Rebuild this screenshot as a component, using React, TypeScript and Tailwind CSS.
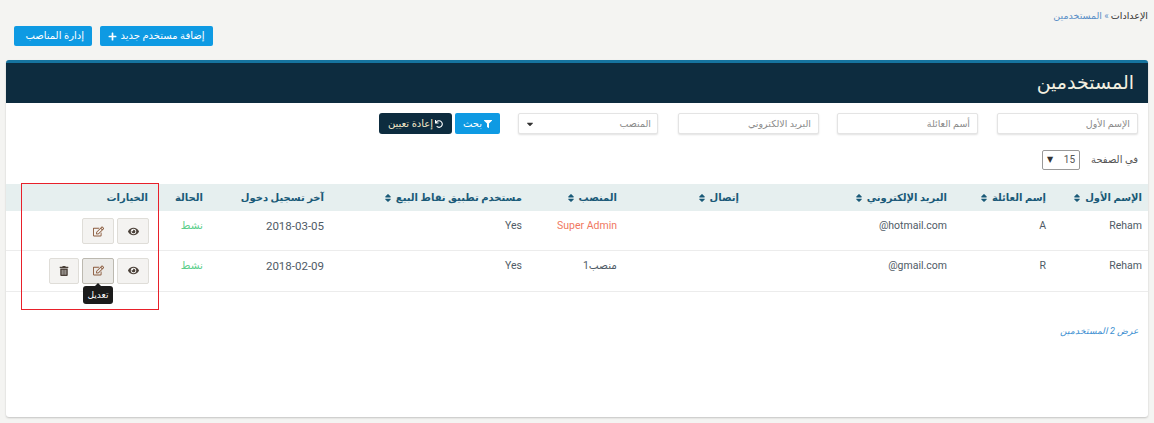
import { FaEye, FaRegEdit, FaTrashAlt, FaFilter, FaUndo, FaPlus, FaSort, FaCaretDown } from "react-icons/fa";

const cols = [
  { t: "الإسم الأول", w: "w-[96px]", s: true },
  { t: "إسم العائلة", w: "w-[99px]", s: true },
  { t: "البريد الإلكتروني", w: "w-[208px]", s: true },
  { t: "إتصال", w: "w-[122px]", s: true },
  { t: "المنصب", w: "w-[95px]", s: true },
  { t: "مستخدم تطبيق نقاط البيع", w: "w-[198px]", s: true },
  { t: "آخر تسجيل دخول", w: "w-[121px]", s: false },
  { t: "الحالة", w: "w-[55px]", s: false },
  { t: "الخيارات", w: "w-[148px]", s: false },
];

function Input({ p, w }: { p: string; w: string }) {
  return (
    <div className={`${w} h-[21px] bg-white border border-[#e4e4e4] rounded-[2px] shadow-[0_1px_2px_rgba(0,0,0,0.12)] pr-[7px] flex items-center text-[9.5px] text-[#8a8a8a] shrink-0`}>
      {p}
    </div>
  );
}

function Act({ children, active, w = "w-[32px]" }: { children: React.ReactNode; active?: boolean; w?: string }) {
  return (
    <button className={`${w} h-[26px] rounded-[2px] border flex items-center justify-center text-[11px] ${active ? "bg-[#ebeae7] border-[#bcb9b0]" : "bg-[#f4f3f1] border-[#dfddd8]"} text-[#4a4038]`}>
      {children}
    </button>
  );
}

function Row({ email, last, pos, posCls, date, trash, h }: { email: string; last: string; pos: string; posCls: string; date: string; trash?: boolean; h: string }) {
  const td = "px-[6px] pt-[8px] align-top text-[#4f5b66]";
  return (
    <tr className={`${h} border-b border-[#ececec]`}>
      <td className={td}>Reham</td>
      <td className={td}>{last}</td>
      <td className={td}><span dir="ltr">{email}</span></td>
      <td className={td}></td>
      <td className={`${td} ${posCls}`}>{pos}</td>
      <td className={td}>Yes</td>
      <td className={`${td} text-[11.5px]`}>{date}</td>
      <td className={`${td} !text-[#5ccf8c]`}>نشط</td>
      <td className="px-[5px] pt-[7px] align-top">
        <div className="flex gap-[3px]">
          <Act><FaEye /></Act>
          <Act active={trash}><FaRegEdit className="text-[#8a5a3c]" /></Act>
          {trash && <Act w="w-[30px]"><FaTrashAlt className="text-[10px]" /></Act>}
        </div>
      </td>
    </tr>
  );
}

export default function App() {
  return (
    <div dir="rtl" className="relative w-[1154px] h-[423px] overflow-hidden bg-[#f4f4f2] font-['Roboto','DejaVu_Sans',sans-serif] text-[10.5px] leading-[14px]">
      <div className="h-[26px] pt-[9px] pr-[6px] flex gap-[2px] text-[9.5px]">
        <span className="text-[#333]">الإعدادات</span>
        <span className="text-[#5b8fc7]">» المستخدمين</span>
      </div>
      <div className="flex gap-[8px] pr-[941px] h-[34px]">
        <button className="w-[113px] h-[20px] bg-[#0e9ae3] rounded-[2px] text-white text-[10px] flex items-center justify-center gap-[3px]">
          إضافة مستخدم جديد <FaPlus className="text-[9px]" />
        </button>
        <button className="w-[78px] h-[20px] bg-[#0e9ae3] rounded-[2px] text-white text-[10px] pr-[8px] flex items-center">
          إدارة المناصب
        </button>
      </div>
      <div className="mx-[6px] h-[357px] bg-white border-t-[3px] border-[#16749f] rounded-[3px] shadow-[0_1px_2px_rgba(0,0,0,0.2)]">
        <div className="h-[40px] bg-[#0d2c3f] text-[#f3f0e0] text-[19px] leading-[40px] pr-[14px]">المستخدمين</div>
        <div className="flex items-start mt-[10px] pr-[10px]">
          <Input p="الإسم الأول" w="w-[141px]" />
          <div className="w-[19px] shrink-0" />
          <Input p="أسم العائلة" w="w-[141px]" />
          <div className="w-[18px] shrink-0" />
          <Input p="البريد الالكتروني" w="w-[141px]" />
          <div className="w-[20px] shrink-0" />
          <div className="w-[140px] h-[21px] bg-white border border-[#e4e4e4] rounded-[2px] shadow-[0_1px_2px_rgba(0,0,0,0.12)] px-[6px] flex items-center justify-between text-[9.5px] text-[#8a8a8a] shrink-0">
            <span>المنصب</span>
            <FaCaretDown className="text-[#333] text-[10px]" />
          </div>
          <button className="mr-[18px] w-[45px] h-[21px] bg-[#0e9ae3] rounded-[2px] text-white text-[10px] flex items-center justify-center gap-[2px]">
            <FaFilter className="text-[8px]" /> بحث
          </button>
          <button className="mr-[3px] w-[73px] h-[21px] bg-[#0d2c3f] rounded-[3px] text-[#f3e8c8] text-[10px] flex items-center justify-center gap-[2px]">
            <FaUndo className="text-[8px] text-white" /> إعادة تعيين
          </button>
        </div>
        <div className="flex items-center mt-[16px] pr-[10px] h-[20px] text-[10px] text-[#555]">
          <span>في الصفحة</span>
          <div className="mr-[11px] w-[38px] h-[20px] border border-[#999] rounded-[2px] flex items-center justify-between px-[4px] text-[10px]">
            <span>15</span><span className="text-[8px] text-[#333]">▼</span>
          </div>
        </div>
        <table className="mt-[14px] w-[1142px] table-fixed border-b border-[#d8d8d8]">
          <thead>
            <tr className="h-[27px] bg-[#e6efef]">
              {cols.map((c) => (
                <th key={c.t} className={`${c.w} px-[6px] text-right text-[10px] font-semibold text-[#1a5a78] whitespace-nowrap`}>
                  <span className="inline-flex items-center gap-[3px]">
                    {c.t}{c.s && <FaSort className="text-[10px]" />}
                  </span>
                </th>
              ))}
            </tr>
          </thead>
          <tbody>
            <Row email="@hotmail.com" last="A" pos="Super Admin" posCls="!text-[#f0785f]" date="2018-03-05" h="h-[39px]" />
            <Row email="@gmail.com" last="R" pos="منصب1" posCls="" date="2018-02-09" trash h="h-[41px]" />
          </tbody>
        </table>
        <div className="mt-[32px] pr-[10px] text-[9px] italic text-[#3d8fd1]">عرض 2 المستخدمين</div>
      </div>
      <div className="absolute left-[21px] top-[183px] w-[138px] h-[127px] border border-[#e8202a]" />
      <div className="absolute left-[83px] top-[286px] w-[30px] h-[18px] bg-[#1b1b1b] rounded-[3px] text-white text-[9px] flex items-center justify-center">
        تعديل
        <div className="absolute left-[12px] top-[-3px] w-0 h-0 border-x-[3px] border-x-transparent border-b-[3px] border-b-[#1b1b1b]" />
      </div>
    </div>
  );
}
